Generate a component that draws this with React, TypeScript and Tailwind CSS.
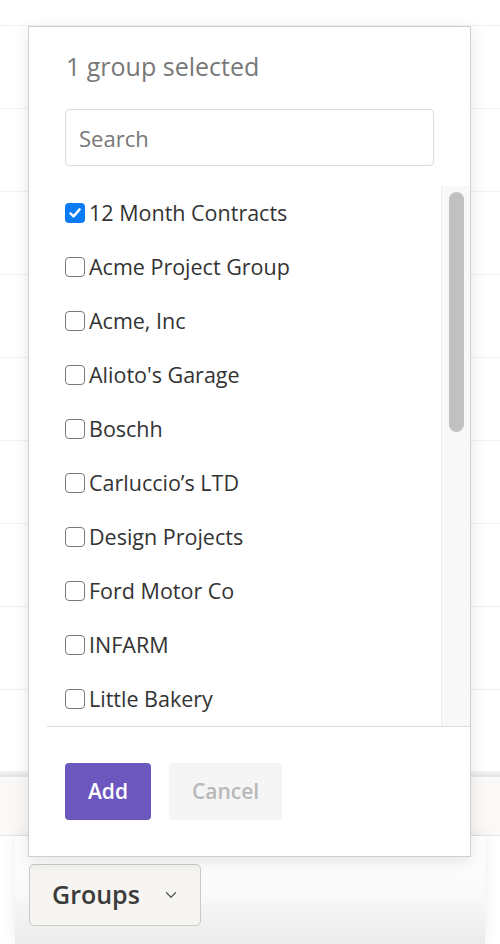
import { ChevronDown } from 'lucide-react';

const groups = [
    { name: '12 Month Contracts', checked: true },
    { name: 'Acme Project Group', checked: false },
    { name: 'Acme, Inc', checked: false },
    { name: "Alioto's Garage", checked: false },
    { name: 'Boschh', checked: false },
    { name: 'Carluccio’s LTD', checked: false },
    { name: 'Design Projects', checked: false },
    { name: 'Ford Motor Co', checked: false },
    { name: 'INFARM', checked: false },
    { name: 'Little Bakery', checked: false },
];

function Checkbox({ checked }: { checked: boolean }) {
    if (checked) {
        return (
            <span className="flex h-[20px] w-[20px] shrink-0 items-center justify-center rounded-[4px] bg-[#0b7cf6]">
                <svg width="14" height="14" viewBox="0 0 14 14" fill="none">
                    <path d="M2.5 7.4 5.6 10.4 11.6 3.4" stroke="white" strokeWidth="2.4" strokeLinecap="round" strokeLinejoin="round" />
                </svg>
            </span>
        );
    }
    return <span className="h-[20px] w-[20px] shrink-0 rounded-[4px] border-[1.5px] border-[#7a7a7a] bg-white" />;
}

export default function App() {
    return (
        <div className="relative h-[944px] w-[500px] overflow-hidden bg-white font-['Open_Sans',sans-serif]">
            {/* Page behind the popover */}
            <div className="flex h-full flex-col">
                <div className="h-[26px] shrink-0 border-b border-[#f1f1f1]" />
                {Array.from({ length: 8 }).map((_, i) => (
                    <div key={i} className="h-[83px] shrink-0 border-b border-[#f1f1f1]" />
                ))}
                <div className="h-[81px] shrink-0" />
                <div className="h-[6px] shrink-0 bg-gradient-to-b from-[#f3f3f3] to-[#e4e4e4]" />
                <div className="h-[59px] shrink-0 border-b border-[#e6e6e6] bg-[#faf9f7]" />
                <div className="mx-[15px] flex flex-1 items-end bg-gradient-to-b from-white via-[#fafafa] to-[#ebebeb] pb-[18px] shadow-[0_0_14px_rgba(0,0,0,0.08)]">
                    <button className="ml-[14px] flex h-[62px] w-[172px] items-center rounded-[5px] border border-[#c9c9c9] bg-[#f6f5f2] pl-[22px] text-[25px] font-semibold text-[#3b3b3b]">
                        Groups
                        <ChevronDown className="ml-[22px] text-[#555]" size={18} strokeWidth={1.6} />
                    </button>
                </div>
            </div>

            {/* Group picker popover */}
            <div className="absolute left-[28px] top-[26px] z-10 flex h-[831px] w-[443px] flex-col border border-[#d0d0d0] bg-white shadow-[0_4px_16px_rgba(0,0,0,0.10)]">
                <h2 className="ml-[37px] mt-[23px] text-[25px] leading-[32px] text-[#787878]">1 group selected</h2>

                <input
                    type="text"
                    placeholder="Search"
                    className="ml-[36px] mt-[27px] h-[57px] w-[369px] rounded-[4px] border border-[#dcdcdc] px-[13px] text-[22px] text-[#333] outline-none placeholder:text-[#777]"
                />

                <div className="ml-[18px] mt-[20px] flex h-[541px] border-b border-[#dddddd]">
                    <div className="flex-1 overflow-hidden">
                        {groups.map((g) => (
                            <label key={g.name} className="flex h-[54px] items-center gap-[4px] pl-[18px] text-[21.5px] text-[#333]">
                                <Checkbox checked={g.checked} />
                                <span>{g.name}</span>
                            </label>
                        ))}
                    </div>
                    <div className="w-[29px] shrink-0 border-l border-[#ececec] bg-[#f8f8f8] pl-[7px] pt-[6px]">
                        <div className="h-[240px] w-[15px] rounded-full bg-[#c1c1c1]" />
                    </div>
                </div>

                <div className="ml-[36px] mt-[36px] flex gap-[18px]">
                    <button className="h-[57px] w-[86px] rounded-[4px] bg-[#6b57be] text-[21px] font-semibold text-white">Add</button>
                    <button className="h-[57px] w-[113px] rounded-[4px] bg-[#f5f5f5] text-[21px] font-semibold text-[#b8b8b8]">Cancel</button>
                </div>
            </div>
        </div>
    );
}
